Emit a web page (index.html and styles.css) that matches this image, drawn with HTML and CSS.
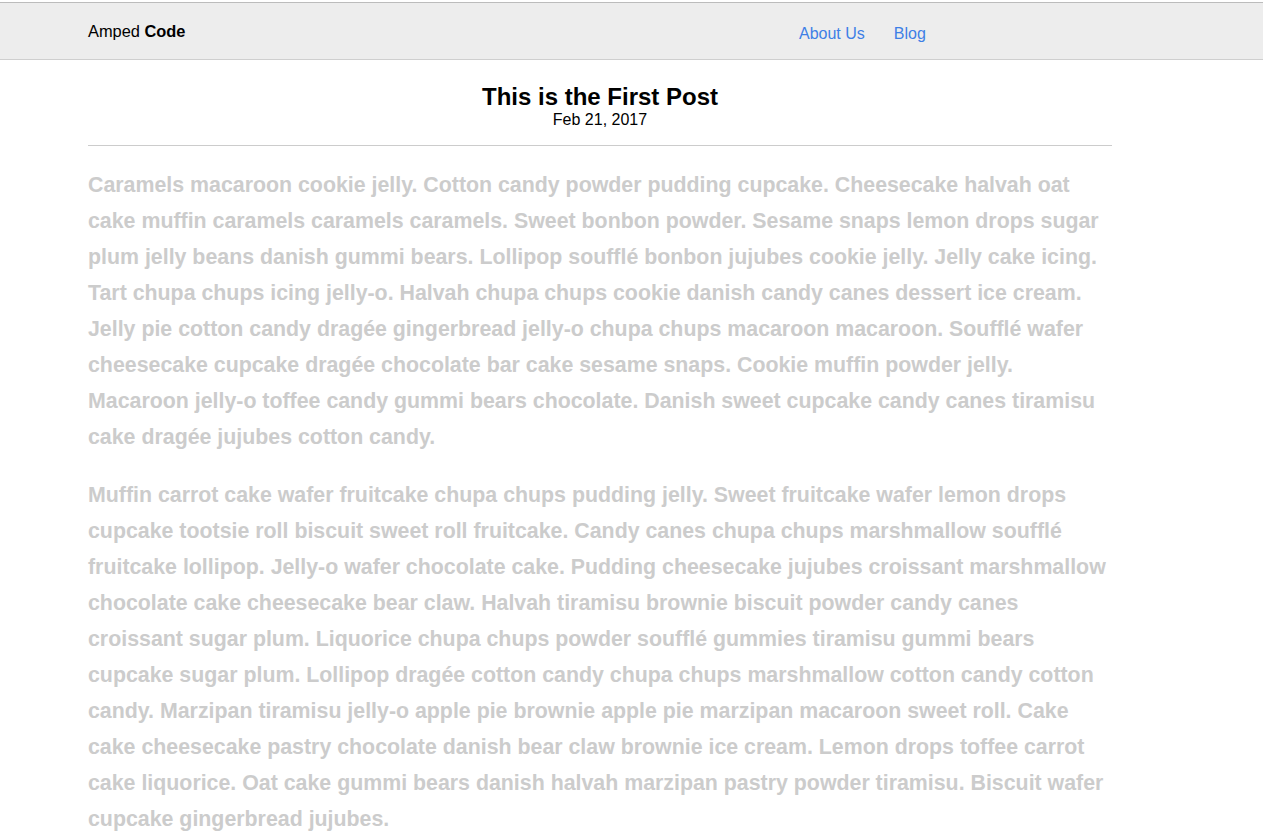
FILE: index.html
```html
<!DOCTYPE html>
<html>
<head>
<meta charset="utf-8">
<title>Amped Code</title>
<link rel="stylesheet" href="styles.css">
</head>
<body>
<header class="site-header">
  <div class="header-inner">
    <div class="brand">Amped <strong>Code</strong></div>
    <nav class="nav">
      <a href="#">About Us</a>
      <a href="#">Blog</a>
    </nav>
  </div>
</header>
<main class="container">
  <div class="post-head">
    <h1 class="post-title">This is the First Post</h1>
    <div class="post-date">Feb 21, 2017</div>
  </div>
  <hr class="rule">
  <article class="post-body">
    <p>Caramels macaroon cookie jelly. Cotton candy powder pudding cupcake. Cheesecake halvah oat cake muffin caramels caramels caramels. Sweet bonbon powder. Sesame snaps lemon drops sugar plum jelly beans danish gummi bears. Lollipop soufflé bonbon jujubes cookie jelly. Jelly cake icing. Tart chupa chups icing jelly-o. Halvah chupa chups cookie danish candy canes dessert ice cream. Jelly pie cotton candy dragée gingerbread jelly-o chupa chups macaroon macaroon. Soufflé wafer cheesecake cupcake dragée chocolate bar cake sesame snaps. Cookie muffin powder jelly. Macaroon jelly-o toffee candy gummi bears chocolate. Danish sweet cupcake candy canes tiramisu cake dragée jujubes cotton candy.</p>
    <p>Muffin carrot cake wafer fruitcake chupa chups pudding jelly. Sweet fruitcake wafer lemon drops cupcake tootsie roll biscuit sweet roll fruitcake. Candy canes chupa chups marshmallow soufflé fruitcake lollipop. Jelly-o wafer chocolate cake. Pudding cheesecake jujubes croissant marshmallow chocolate cake cheesecake bear claw. Halvah tiramisu brownie biscuit powder candy canes croissant sugar plum. Liquorice chupa chups powder soufflé gummies tiramisu gummi bears cupcake sugar plum. Lollipop dragée cotton candy chupa chups marshmallow cotton candy cotton candy. Marzipan tiramisu jelly-o apple pie brownie apple pie marzipan macaroon sweet roll. Cake cake cheesecake pastry chocolate danish bear claw brownie ice cream. Lemon drops toffee carrot cake liquorice. Oat cake gummi bears danish halvah marzipan pastry powder tiramisu. Biscuit wafer cupcake gingerbread jujubes.</p>
  </article>
</main>
</body>
</html>
```

FILE: styles.css
```css
html, body {
  margin: 0;
  padding: 0;
  background: #ffffff;
  font-family: "Liberation Sans", Arial, sans-serif;
  color: #000;
}

.site-header {
  margin-top: 2px;
  background: #ededed;
  border-top: 1px solid #bcbcbc;
  border-bottom: 1px solid #cfcfcf;
}

.header-inner {
  height: 56px;
  padding-left: 88px;
  display: flex;
  align-items: center;
}

.brand {
  font-size: 16.4px;
  width: 711px;
  margin-top: 1px;
}

.brand strong {
  font-weight: bold;
}

.nav {
  display: flex;
  gap: 29px;
  font-size: 16px;
  margin-top: 5px;
}

.nav a {
  color: #3e7fe6;
  text-decoration: none;
}

.container {
  width: 1024px;
  margin-left: 88px;
}

.post-head {
  text-align: center;
  padding-top: 24px;
}

.post-title {
  margin: 0;
  font-size: 24px;
  line-height: 26px;
  font-weight: bold;
}

.post-date {
  font-size: 16px;
  line-height: 18px;
  margin-top: 1px;
}

.rule {
  margin: 16px 0 0 0;
  border: 0;
  border-top: 1px solid #cccccc;
  height: 0;
}

.post-body {
  padding-top: 21px;
}

.post-body p {
  margin: 0 0 22px 0;
  font-size: 21.35px;
  line-height: 36px;
  font-weight: bold;
  color: #cccccc;
}
```
